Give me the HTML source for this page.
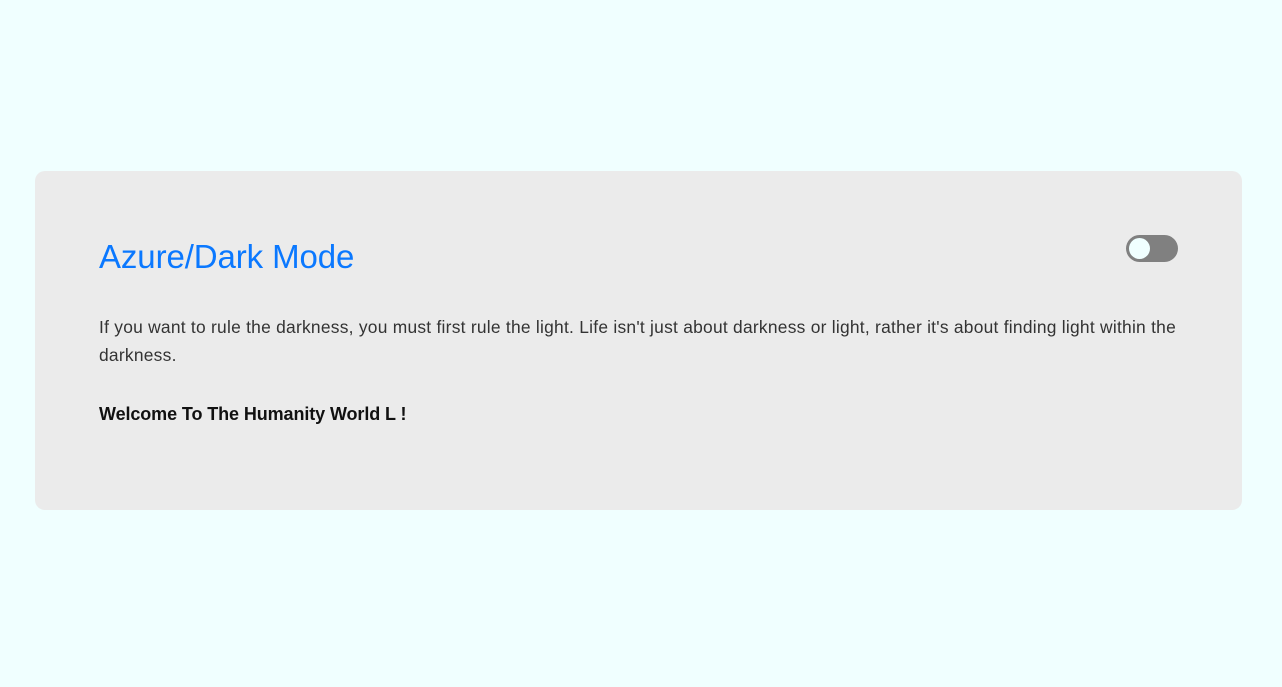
<!DOCTYPE html>
<html><head><style>
html,body{margin:0;padding:0;background:#f0ffff;width:1282px;height:687px;overflow:hidden;font-family:"Liberation Sans",sans-serif;}
.card{position:absolute;left:35px;top:171px;width:1207px;height:339px;background:#ebebeb;border-radius:10px;}
h1{position:absolute;left:64px;top:66px;margin:0;font-weight:normal;font-size:33px;color:#0a78ff;letter-spacing:-0.1px;line-height:40px;}
p{position:absolute;left:64px;top:142px;width:1100px;margin:0;font-size:17.4px;line-height:28px;color:#333;letter-spacing:0.25px;}
.w{position:absolute;left:64px;top:233px;margin:0;font-size:18px;font-weight:bold;color:#111;letter-spacing:-0.1px;}
.t{position:absolute;left:1091px;top:64px;width:52px;height:27px;border-radius:14px;background:#808080;}
.t:after{content:"";position:absolute;left:3px;top:3px;width:21px;height:21px;border-radius:50%;background:#f0ffff;}
</style></head><body>
<div class="card">
<h1>Azure/Dark Mode</h1>
<div class="t"></div>
<p>If you want to rule the darkness, you must first rule the light. Life isn't just about darkness or light, rather it's about finding light within the darkness.</p>
<div class="w">Welcome To The Humanity World L !</div>
</div>
</body></html>
